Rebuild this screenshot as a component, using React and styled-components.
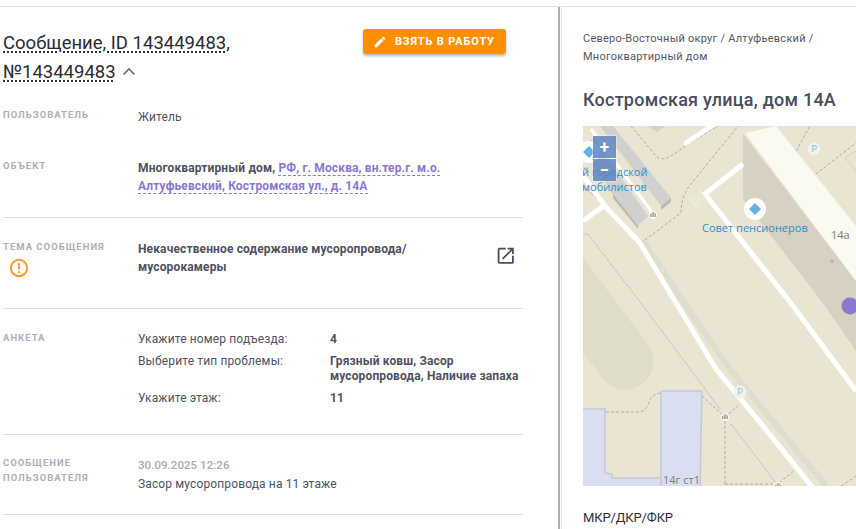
import React from 'react';
import styled, { createGlobalStyle } from 'styled-components';

const GlobalStyle = createGlobalStyle`
  html, body {
    margin: 0;
    padding: 0;
    background: #fff;
    font-family: Roboto, "Liberation Sans", sans-serif;
  }
`;

const App = () => (
  <>
    <GlobalStyle />
    <StPage>
      <StLeft>
        <StHeader>
          <StTitle>
            <StTitleText>Сообщение, ID 143449483, №143449483</StTitleText>
            <StChevron width="16" height="16" viewBox="0 0 16 16">
              <path d="M2.5 10.5 L8 5 L13.5 10.5" />
            </StChevron>
          </StTitle>
          <StTakeButton type="button">
            <svg width="14" height="14" viewBox="0 0 24 24" fill="#fff">
              <path d="M3 17.25V21h3.75L17.81 9.94l-3.75-3.75L3 17.25zM20.71 7.04a1 1 0 0 0 0-1.41l-2.34-2.34a1 1 0 0 0-1.41 0l-1.83 1.83 3.75 3.75 1.83-1.83z" />
            </svg>
            Взять в работу
          </StTakeButton>
        </StHeader>

        <StRow $height={51}>
          <StLabel>Пользователь</StLabel>
          <StValue>Житель</StValue>
        </StRow>

        <StRow $height={60} $line>
          <StLabel>Объект</StLabel>
          <StValue>
            <b>Многоквартирный дом, </b>
            <StAddress>РФ, г. Москва, вн.тер.г. м.о. Алтуфьевский, Костромская ул., д. 14А</StAddress>
          </StValue>
        </StRow>

        <StRow $height={91} $line $pad={21}>
          <div>
            <StLabel>Тема сообщения</StLabel>
            <StWarn width="20" height="20" viewBox="0 0 20 20">
              <circle cx="10" cy="10" r="8.2" fill="none" stroke="#ff9a2e" strokeWidth="2" />
              <rect x="9" y="5" width="2" height="6.5" rx="0.6" fill="#ff9a2e" />
              <rect x="9" y="13" width="2" height="2" rx="0.6" fill="#ff9a2e" />
            </StWarn>
          </div>
          <StTopic>
            <b>Некачественное содержание мусоропровода/ мусорокамеры</b>
            <StOpen width="21.5" height="21.5" viewBox="0 0 24 24" fill="#4a4e5e">
              <path d="M19 19H5V5h7V3H5a2 2 0 0 0-2 2v14a2 2 0 0 0 2 2h14c1.1 0 2-.9 2-2v-7h-2v7zM14 3v2h3.59l-9.83 9.83 1.41 1.41L19 6.41V10h2V3h-7z" />
            </StOpen>
          </StTopic>
        </StRow>

        <StRow $height={126} $line $pad={21}>
          <StLabel>Анкета</StLabel>
          <StSurvey>
            <span>Укажите номер подъезда:</span>
            <b>4</b>
            <span>Выберите тип проблемы:</span>
            <b>Грязный ковш, Засор мусоропровода, Наличие запаха</b>
            <span>Укажите этаж:</span>
            <b>11</b>
          </StSurvey>
        </StRow>

        <StRow $height={80} $line $pad={20}>
          <StLabel>Сообщение пользователя</StLabel>
          <StValue>
            <StDate>30.09.2025 12:26</StDate>
            Засор мусоропровода на 11 этаже
          </StValue>
        </StRow>
      </StLeft>

      <StRight>
        <StCrumbs>Северо-Восточный округ / Алтуфьевский / Многоквартирный дом</StCrumbs>
        <StStreet>Костромская улица, дом 14А</StStreet>
        <StMap>
          <MapDrawing />
          <StZoomBox>
            <StZoomButton type="button">+</StZoomButton>
            <StZoomButton type="button">−</StZoomButton>
          </StZoomBox>
        </StMap>
        <StSection>МКР/ДКР/ФКР</StSection>
      </StRight>
    </StPage>
  </>
);

const Entrance = ({ x, y }) => (
  <g transform={`translate(${x} ${y})`}>
    <circle r="4" fill="#fff" opacity="0.85" />
    <path d="M-2.4 -1V2M-0.8 -2.4V2M0.8 -3V2M2.4 -1.5V2" stroke="#77746a" strokeWidth="0.8" />
  </g>
);

const Poi = ({ x, y, r = 11 }) => (
  <g transform={`translate(${x} ${y})`}>
    <circle r={r} fill="#fff" />
    <path d="M0 -6 L6 0 L0 6 L-6 0 Z" fill="#66aee8" />
  </g>
);

const Parking = ({ x, y }) => (
  <g transform={`translate(${x} ${y})`}>
    <circle r="6.5" fill="#f3f1e8" />
    <text y="3.4" textAnchor="middle" fontSize="9.5" fill="#86bce6" fontFamily="Open Sans">P</text>
  </g>
);

const MapDrawing = () => (
  <svg width="273" height="360" viewBox="0 0 273 360" style={{ display: 'block' }} fill="none">
    <rect width="273" height="360" fill="#e9e5d2" />

    {/* park */}
    <path d="M-18 155 L42 235" stroke="#dfddca" strokeWidth="57" strokeLinecap="round" />

    {/* top left houses */}
    <polygon points="64,0 82,0 74,6" fill="#d6d1c0" />
    <polygon points="17,0 30,0 88,72 78,80" fill="#d0d0cf" />
    <polygon points="78,80 88,72 88,76 78,84" fill="#b9b9b6" />
    <polygon points="0,22 10,12 65,90 55,100 30,68" fill="#d0d0cf" />
    <polygon points="30,68 55,100 55,103 30,72" fill="#b9b9b6" />

    {/* big house and its shade */}
    <polygon points="160,8 273,155 273,225 242,180 160,73" fill="#d6d1c1" />
    <polygon points="162,7 193,0 273,100 273,155" fill="#fbfaf0" />

    {/* side strip */}
    <path d="M60 115 L103 180 L147 243 L243 360" stroke="#dfddcb" strokeWidth="6" />

    {/* thin lines */}
    <path d="M5 108 L60 180 L137 283 M148 298 L193 357 M0 108 L5 108" stroke="#c9c8bc" strokeWidth="1" />
    <path d="M262 32 L273 25 M262 32 L273 45" stroke="#d3d0bd" strokeWidth="1" />

    {/* foot paths */}
    <g stroke="#a7a594" strokeWidth="0.9" strokeDasharray="3 2">
      <path d="M48 0 L72 29 Q78 36 88 30 L110 15 L135 0" />
      <path d="M58 117 L98 87 Q98 70 108 58 L155 0" />
      <path d="M213 25 L227 0 M233 48 L273 17" />
      <path d="M23 286 L55 286 Q63 286 66 276 Q69 268 78 267" />
      <path d="M119 270 L142 291 L142 360 M142 291 L155 280" />
      <path d="M142 358 L195 358 L212 344 M258 360 L273 350" />
      <path d="M0 60 L18 76" />
    </g>

    {/* roads */}
    <g stroke="#fff" strokeWidth="5">
      <path d="M103 17 L130 -1" strokeLinecap="round" />
      <path d="M160 38 L122 68 L210 180 L273 265" />
      <path d="M0 50 L22 80 L57 117 L95 180 L133 243 L180 300 L230 362" />
      <path d="M0 95 L23 78" />
      <path d="M8 3 L68 85" strokeWidth="3" />
    </g>

    {/* houses below */}
    <g fill="#d9dff0" stroke="#c3c9d8" strokeWidth="1.5">
      <path d="M78 362 L78 266 Q78 265 80 265 L118 265 Q119 265 119 266 L117 362 Z" />
      <path d="M-2 283 L22 283 L22 347 L29 348 L29 352 L78 352 L78 362 L-2 362 Z" />
    </g>

    {/* crosswalk */}
    <g transform="translate(115 73) rotate(-38)">
      <rect x="-7" y="-6" width="14" height="12" fill="#f1f3de" />
      <path d="M-5 -6V6M-3 -6V6M-1 -6V6M1 -6V6M3 -6V6M5 -6V6" stroke="#d5d9bb" strokeWidth="0.8" />
    </g>

    <circle cx="249" cy="135" r="2" fill="#bdb9a8" />
    <circle cx="267" cy="180" r="8.5" fill="#8b78cf" />

    <Entrance x={70} y={89} />
    <Entrance x={142} y={291} />
    <Entrance x={195} y={360} />
    <Parking x={231} y={23} />
    <Parking x={157} y={266} />
    <Poi x={6} y={26} />
    <Poi x={172} y={83} />

    <g fontFamily="Open Sans" fontSize="11" fontWeight="500" fill="#2b8fd0">
      <text x="-1" y="50">й городской</text>
      <text x="-1" y="65">мобилистов</text>
      <text x="119" y="106">Совет пенсионеров</text>
    </g>
    <g fontFamily="Open Sans" fontSize="11" fill="#7d7a6f">
      <text x="248" y="113">14а</text>
      <text x="80" y="358">14г ст1</text>
    </g>
  </svg>
);

export default App;

const StPage = styled.div`
  display: flex;
  box-sizing: border-box;
  height: 523px;
  margin-top: 6px;
  border-top: 1px solid #e2e2e4;
  overflow: hidden;
`;

const StLeft = styled.div`
  box-sizing: border-box;
  flex: 0 0 560px;
  width: 560px;
  height: 100%;
  padding: 0 35px 0 3px;
  border-right: 2px solid #adadb6;
`;

const StHeader = styled.div`
  display: flex;
  justify-content: space-between;
  align-items: flex-start;
  box-sizing: border-box;
  padding-top: 22px;
  height: 100px;
`;

const StTitle = styled.h1`
  margin: 0;
  width: 240px;
  font-size: 18.5px;
  line-height: 29px;
  font-weight: 400;
  color: #2b2b30;
`;

const StTitleText = styled.span`
  text-decoration: underline dotted #333;
  text-decoration-thickness: 1.5px;
  text-underline-offset: 2px;
`;

const StChevron = styled.svg`
  margin-left: 5px;
  vertical-align: -2px;
  fill: none;
  stroke: #6a6a72;
  stroke-width: 1.6;
`;

const StTakeButton = styled.button`
  display: flex;
  align-items: center;
  gap: 8px;
  box-sizing: border-box;
  width: 143px;
  height: 25px;
  margin: 0 17px 0 0;
  padding: 0 0 0 10px;
  border: none;
  border-radius: 3px;
  background: #ff8f00;
  box-shadow: 0 2px 3px rgba(0, 0, 0, 0.28);
  color: #fff;
  font-family: inherit;
  font-size: 11px;
  font-weight: 700;
  letter-spacing: 0.85px;
  text-transform: uppercase;
  white-space: nowrap;
`;

const StRow = styled.div`
  display: grid;
  grid-template-columns: 135px 1fr;
  box-sizing: border-box;
  height: ${(p) => p.$height}px;
  padding-top: ${(p) => p.$pad ?? 0}px;
  border-bottom: ${(p) => (p.$line ? '1px solid #dedee0' : 'none')};
`;

const StLabel = styled.div`
  width: 110px;
  font-size: 9.5px;
  line-height: 15px;
  font-weight: 700;
  letter-spacing: 1px;
  color: #aeaeb6;
  text-transform: uppercase;
`;

const StValue = styled.div`
  max-width: 340px;
  padding-top: 1px;
  font-size: 12px;
  line-height: 18px;
  letter-spacing: 0.13px;
  color: #4f525f;

  b {
    font-weight: 700;
  }
`;

const StAddress = styled.span`
  color: #8a78cf;
  font-weight: 700;
  border-bottom: 1px dashed #8a78cf;
`;

const StTopic = styled(StValue)`
  position: relative;
  max-width: none;
  padding-right: 90px;
`;

const StOpen = styled.svg`
  position: absolute;
  right: 6.5px;
  top: 6px;
`;

const StWarn = styled.svg`
  display: block;
  margin: 4px 0 0 6px;
`;

const StSurvey = styled.div`
  display: grid;
  grid-template-columns: 192px 1fr;
  align-content: start;
  row-gap: 7px;
  padding-top: 2px;
  font-size: 12px;
  line-height: 15px;
  letter-spacing: 0.13px;
  color: #4f525f;

  b {
    font-weight: 700;
  }
`;

const StDate = styled.div`
  font-size: 11.5px;
  line-height: 19px;
  letter-spacing: 0.05px;
  font-weight: 500;
  color: #aaaab2;
`;

const StRight = styled.div`
  flex: 1;
  min-width: 0;
  margin-left: 1px;
  padding: 23px 0 0 21px;
  border-left: 1px solid #e2e2e4;
`;

const StCrumbs = styled.div`
  width: 240px;
  font-size: 11px;
  line-height: 18px;
  letter-spacing: 0.25px;
  color: #55565f;
`;

const StStreet = styled.h2`
  margin: 21px 0 13px;
  font-size: 18px;
  line-height: 26px;
  font-weight: 500;
  letter-spacing: 0.23px;
  color: #4a4d5c;
  white-space: nowrap;
`;

const StMap = styled.div`
  position: relative;
  width: 273px;
  height: 360px;
  overflow: hidden;
`;

const StZoomBox = styled.div`
  position: absolute;
  left: 9px;
  top: 9px;
  display: flex;
  flex-direction: column;
  gap: 1px;
  padding: 1px;
  background: rgba(255, 255, 255, 0.35);
`;

const StZoomButton = styled.button`
  width: 23px;
  height: 22px;
  padding: 0;
  border: none;
  background: rgba(80, 120, 190, 0.78);
  color: #fff;
  font-family: inherit;
  font-size: 17px;
  font-weight: 700;
  line-height: 20px;
`;

const StSection = styled.div`
  margin-top: 24px;
  font-size: 13px;
  line-height: 16px;
  letter-spacing: -0.15px;
  color: #2f2f35;
`;
